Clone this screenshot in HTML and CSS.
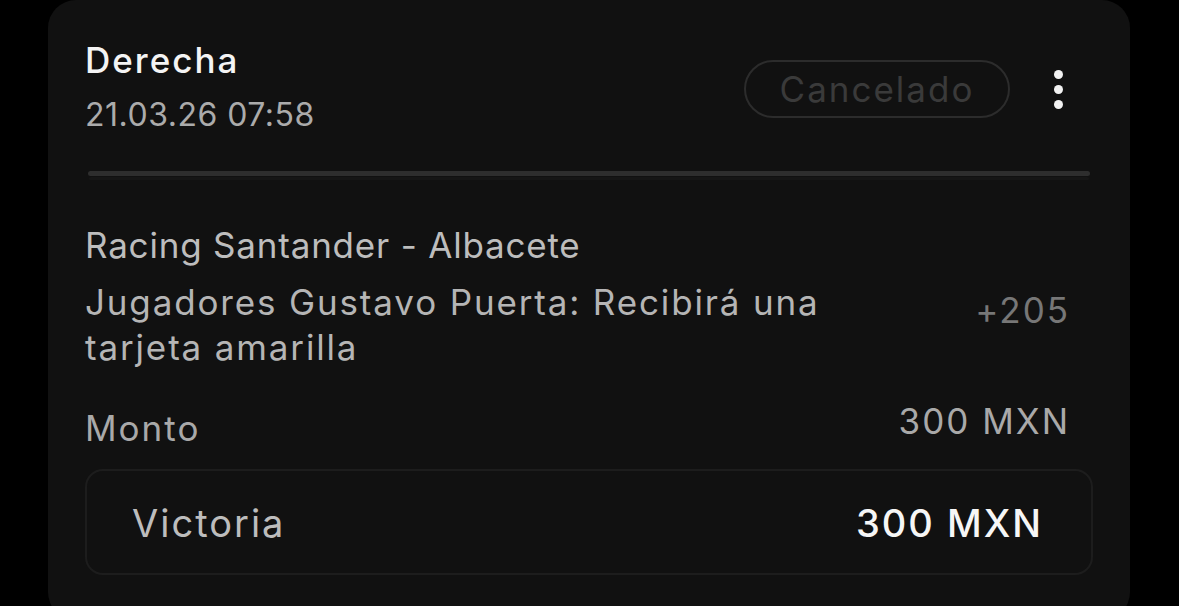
FILE: index.html
```html
<!DOCTYPE html>
<html lang="es">
<head>
<meta charset="utf-8">
<title>Apuesta</title>
<link rel="stylesheet" href="styles.css">
</head>
<body>
<div class="card">
  <div class="header">
    <div class="title-block">
      <div class="title">Derecha</div>
      <div class="date">21.03.26 07:58</div>
    </div>
    <div class="actions">
      <span class="pill">Cancelado</span>
      <span class="kebab"><i></i><i></i><i></i></span>
    </div>
  </div>
  <div class="divider"></div>
  <div class="match">Racing Santander - Albacete</div>
  <div class="bet-row">
    <div class="bet-name">Jugadores Gustavo Puerta: Recibirá una tarjeta amarilla</div>
    <div class="odds">+205</div>
  </div>
  <div class="amount-row">
    <div class="amount-label">Monto</div>
    <div class="amount-value">300 MXN</div>
  </div>
  <div class="win-box">
    <div class="win-label">Victoria</div>
    <div class="win-value">300 MXN</div>
  </div>
</div>
</body>
</html>
```
FILE: styles.css
```css
html, body {
  margin: 0;
  padding: 0;
  background: #000;
  height: 606px;
  overflow: hidden;
}
body {
  font-family: Inter, "Noto Sans", "Liberation Sans", sans-serif;
  font-size: 35px;
  letter-spacing: 2px;
  -webkit-font-smoothing: antialiased;
}
.card {
  margin-left: 48px;
  width: 1082px;
  height: 620px;
  box-sizing: border-box;
  background: #111111;
  border-radius: 28px;
  padding: 38px 37px 0 37px;
}
.header {
  display: flex;
  justify-content: space-between;
  align-items: flex-start;
}
.title {
  line-height: 44px;
  color: #f4f4f4;
  font-weight: 500;
}
.date {
  font-size: 32px;
  line-height: 44px;
  letter-spacing: 0.5px;
  color: #ababab;
  margin-top: 11px;
}
.actions {
  display: flex;
  align-items: center;
  margin-top: 22px;
}
.pill {
  box-sizing: border-box;
  width: 266px;
  height: 58px;
  border: 2px solid #2c2c2c;
  border-radius: 29px;
  display: flex;
  align-items: center;
  justify-content: center;
  color: #3a3a3a;
}
.kebab {
  display: flex;
  flex-direction: column;
  gap: 6px;
  margin-left: 44px;
  margin-right: 30px;
}
.kebab i {
  display: block;
  width: 9px;
  height: 9px;
  border-radius: 50%;
  background: #f2f2f2;
}
.divider {
  margin: 34px 3px 0 3px;
  height: 5px;
  border-radius: 3px;
  background: #2e2e2e;
  box-shadow: 0 5px 0 -1px #161616;
}
.match {
  margin-top: 47px;
  line-height: 44px;
  letter-spacing: 0.8px;
  color: #bdbdbd;
}
.bet-row {
  display: flex;
  justify-content: space-between;
  align-items: flex-start;
  margin-top: 13px;
  padding-right: 23px;
}
.bet-name {
  width: 760px;
  line-height: 45px;
  letter-spacing: 1.85px;
  color: #b5b5b5;
}
.odds {
  line-height: 45px;
  margin-top: 8px;
  color: #777;
}
.amount-row {
  display: flex;
  justify-content: space-between;
  align-items: flex-start;
  margin-top: 29px;
  padding-right: 23px;
}
.amount-label {
  line-height: 45px;
  color: #a9a9a9;
  margin-top: 7px;
}
.amount-value {
  line-height: 45px;
  color: #a9a9a9;
}
.win-box {
  margin-top: 18px;
  height: 106px;
  box-sizing: border-box;
  border: 2px solid #1d1d1d;
  border-radius: 18px;
  display: flex;
  align-items: center;
  justify-content: space-between;
  padding: 2px 48px 0 45px;
  font-size: 38px;
}
.win-label {
  color: #bdbdbd;
}
.win-value {
  color: #f6f6f6;
  font-weight: 500;
}
```
